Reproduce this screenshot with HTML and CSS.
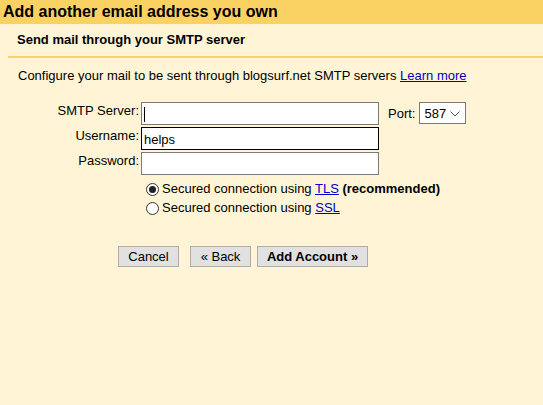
FILE: index.html
```html
<!DOCTYPE html>
<html>
<head>
<meta charset="utf-8">
<link rel="stylesheet" href="styles.css">
</head>
<body>
<div class="header">Add another email address you own</div>
<div class="sub">Send mail through your SMTP server</div>
<div class="intro">Configure your mail to be sent through blogsurf.net SMTP servers <a href="#">Learn more</a></div>
<div class="form">
  <div class="row">
    <div class="label">SMTP Server:</div>
    <div class="field"><span class="caret"></span></div>
    <div class="port-label">Port:</div>
    <div class="select"><span>587</span><svg width="10" height="6" viewBox="0 0 10 6"><path d="M0.5 0.5 L5 5 L9.5 0.5" fill="none" stroke="#555" stroke-width="1"/></svg></div>
  </div>
  <div class="row">
    <div class="label">Username:</div>
    <div class="field focus">helps</div>
  </div>
  <div class="row">
    <div class="label">Password:</div>
    <div class="field"></div>
  </div>
</div>
<div class="radios">
  <div class="radio-row"><span class="radio checked"></span><span>Secured connection using <a href="#">TLS</a> <b>(recommended)</b></span></div>
  <div class="radio-row"><span class="radio"></span><span>Secured connection using <a href="#">SSL</a></span></div>
</div>
<div class="buttons">
  <button class="btn cancel">Cancel</button>
  <button class="btn back">« Back</button>
  <button class="btn add">Add Account »</button>
</div>
</body>
</html>
```

FILE: styles.css
```css
html, body {
  margin: 0;
  padding: 0;
  background: #fff5d6;
  font-family: "Liberation Sans", Arial, sans-serif;
  font-size: 13px;
  color: #000;
  height: 100%;
}
a { color: #0000cc; text-decoration: underline; }
.header {
  background: #fad264;
  height: 24px;
  line-height: 24px;
  font-weight: bold;
  font-size: 16px;
  padding-left: 3px;
  box-sizing: border-box;
}
.sub {
  margin-left: 8px;
  padding-left: 9px;
  height: 32px;
  line-height: 32px;
  font-weight: bold;
  font-size: 13px;
  border-bottom: 2px solid #fad264;
}
.intro {
  margin-top: 10px;
  padding-left: 18px;
  line-height: 16px;
}
.form {
  margin-top: 18px;
  display: flex;
  flex-direction: column;
  gap: 2px;
}
.row {
  display: flex;
  align-items: flex-start;
  height: 23px;
}
.label {
  width: 139px;
  text-align: right;
  line-height: 16px;
  padding-top: 1px;
}
.field {
  margin-left: 2px;
  width: 238px;
  height: 23px;
  box-sizing: border-box;
  border: 1px solid #7a7a7a;
  background: #fff;
  padding: 4px 0 0 2px;
  line-height: 16px;
}
.field.focus { border-color: #000; }
.caret {
  display: block;
  width: 1px;
  height: 15px;
  background: #000;
}
.port-label {
  margin-left: 9px;
  line-height: 16px;
  padding-top: 4px;
}
.select {
  margin-left: 4px;
  width: 47px;
  height: 22px;
  box-sizing: border-box;
  border: 1px solid #7a7a7a;
  background: #fff;
  display: flex;
  align-items: center;
  justify-content: space-between;
  padding: 0 5px 0 4px;
}
.select svg { display: block; margin-top: 1px; }
.radios {
  margin-top: 6px;
  padding-left: 146px;
  display: flex;
  flex-direction: column;
  gap: 3px;
}
.radio-row {
  display: flex;
  align-items: center;
  gap: 3px;
  line-height: 16px;
}
.radio {
  width: 13px;
  height: 13px;
  box-sizing: border-box;
  border: 1px solid #333;
  border-radius: 50%;
  background: #fff;
  position: relative;
  display: inline-block;
}
.radio.checked::after {
  content: "";
  position: absolute;
  left: 2px;
  top: 2px;
  width: 7px;
  height: 7px;
  border-radius: 50%;
  background: #222;
}
.buttons {
  margin-top: 30px;
  padding-left: 118px;
  display: flex;
}
.btn {
  height: 21px;
  box-sizing: border-box;
  background: #e1e1e1;
  border: 1px solid #adadad;
  font-family: "Liberation Sans", Arial, sans-serif;
  font-size: 13px;
  color: #000;
  padding: 0;
  margin: 0;
}
.cancel { width: 61px; }
.back { width: 61px; margin-left: 11px; }
.add { width: 111px; margin-left: 6px; font-weight: bold; }
```
